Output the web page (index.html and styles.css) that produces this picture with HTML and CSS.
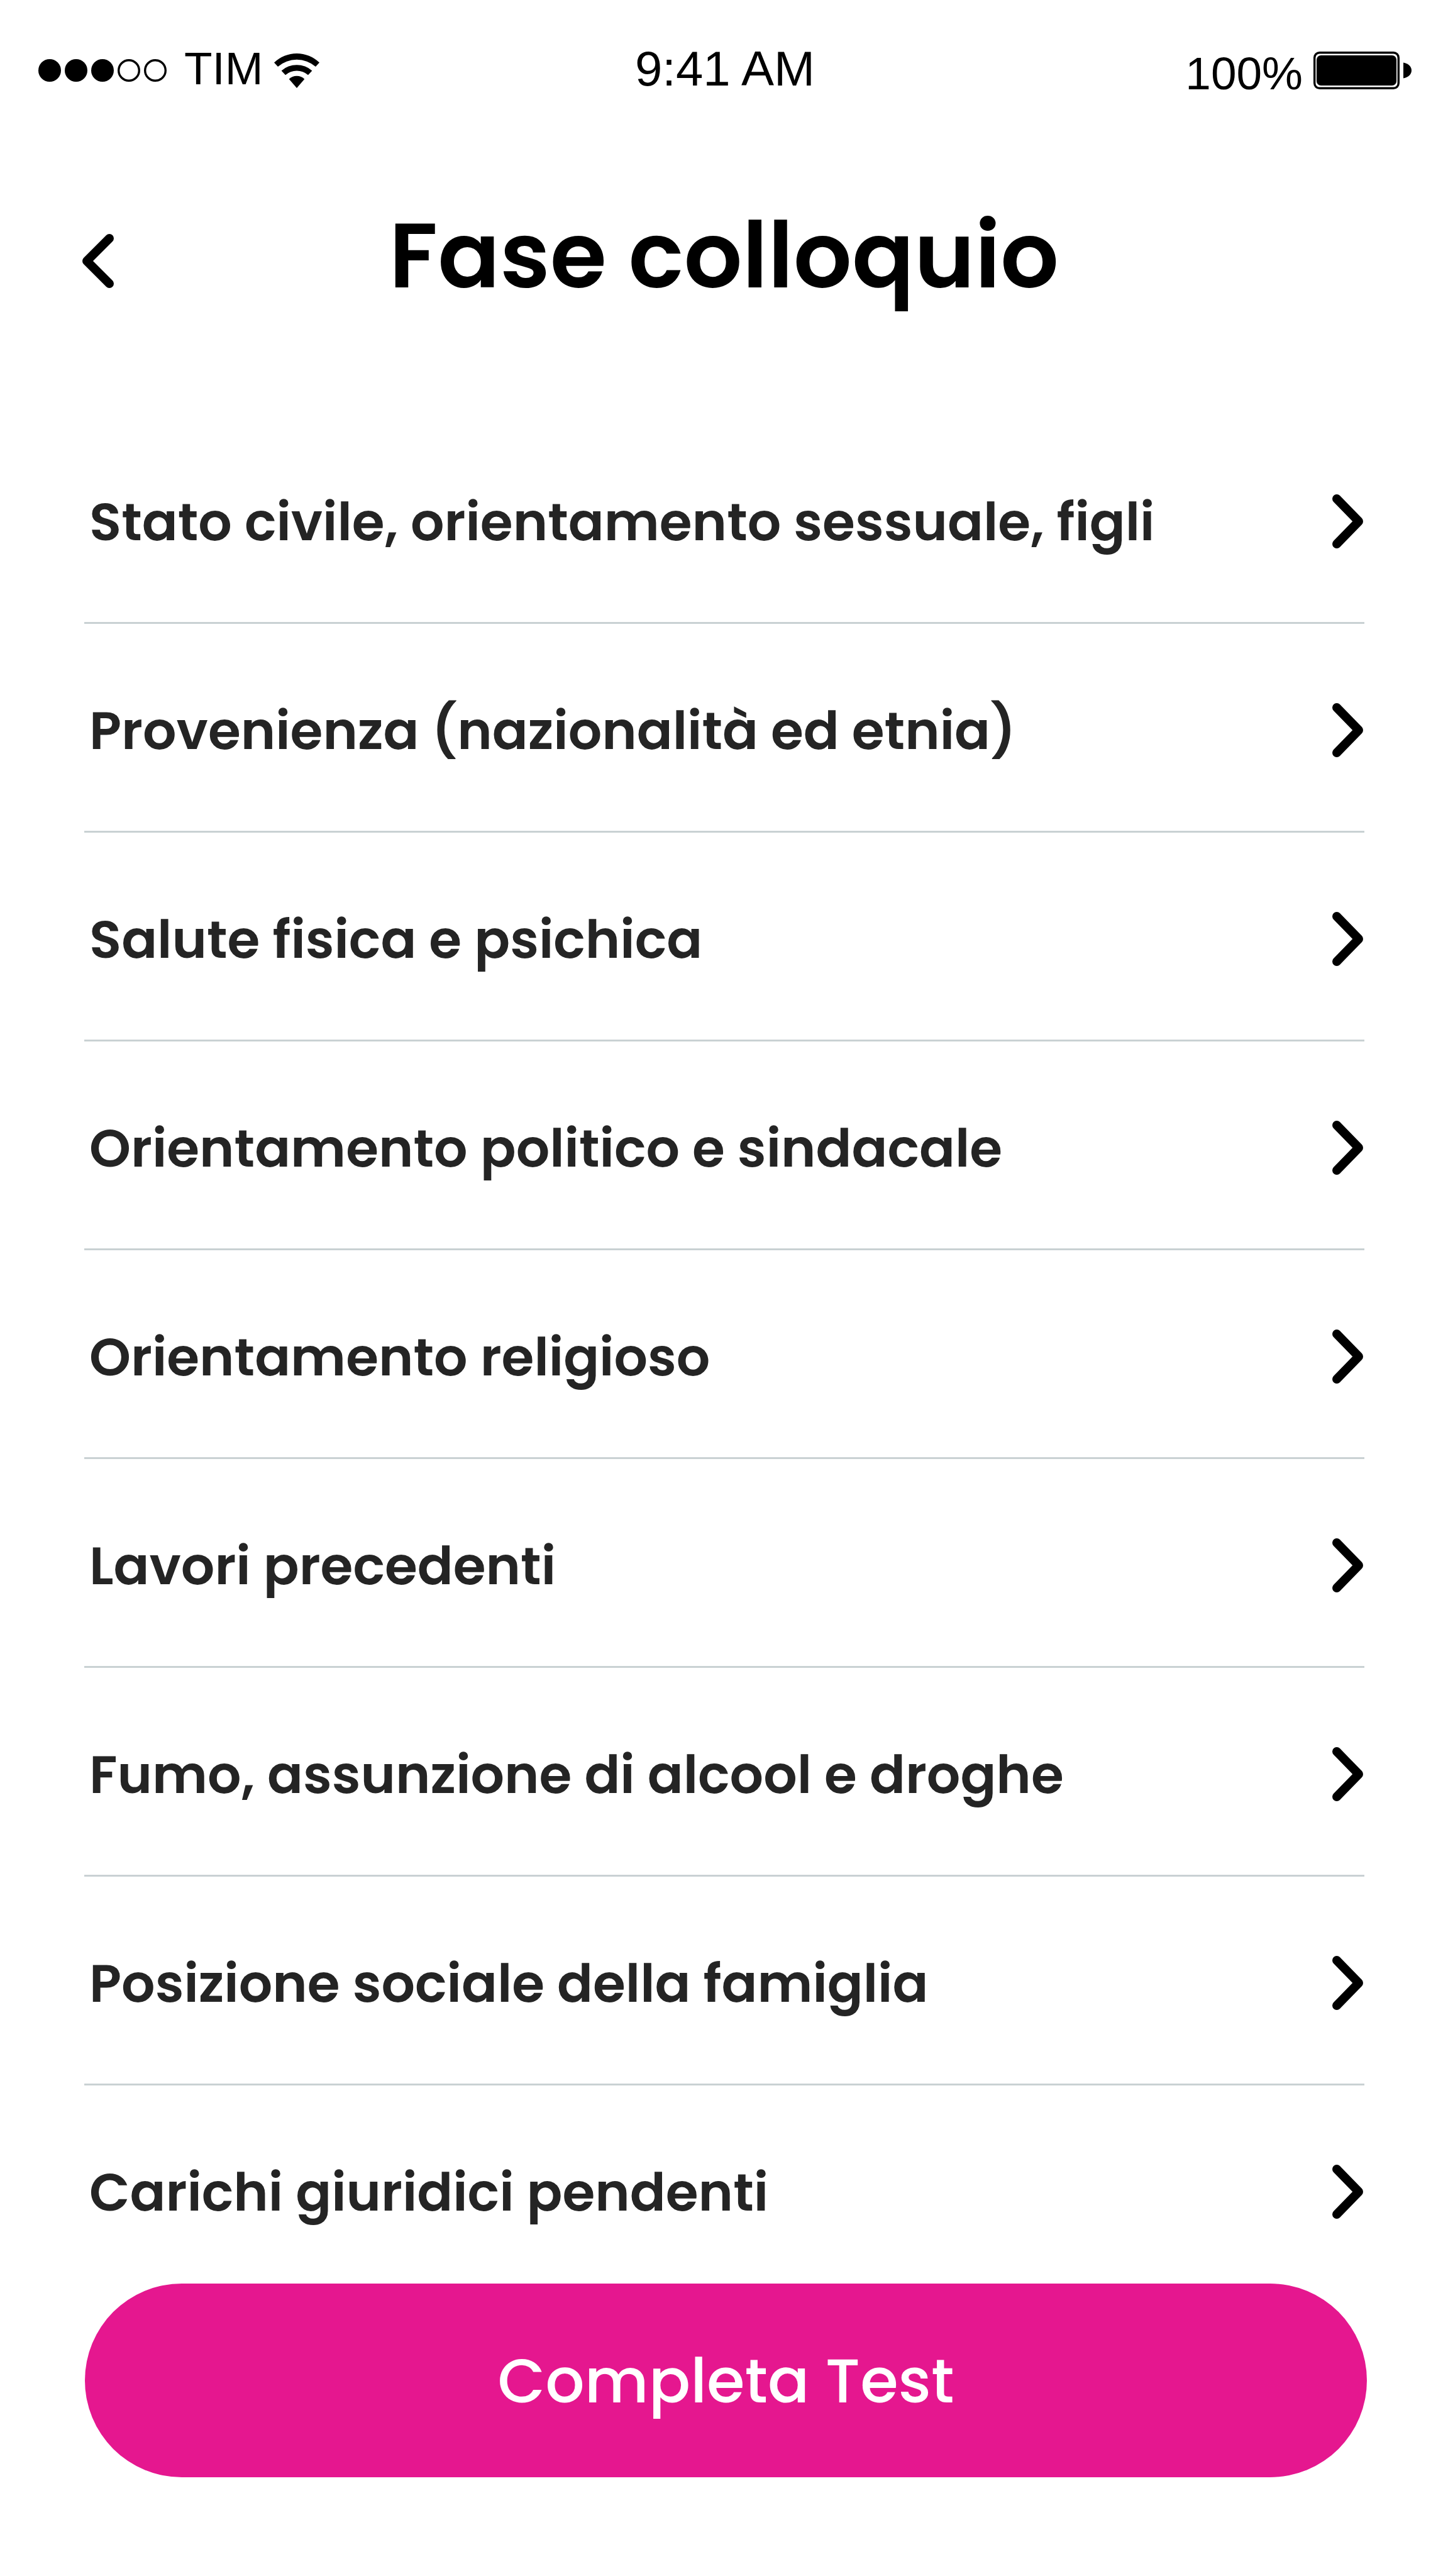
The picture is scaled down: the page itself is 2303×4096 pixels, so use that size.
FILE: index.html
```html
<!DOCTYPE html>
<html lang="it">
<head>
    <meta charset="UTF-8">
    <meta name="viewport" content="width=device-width, initial-scale=1">
    <title>Fase colloquio</title>
    <link rel="stylesheet" href="styles.css">
</head>
<body>
<div class="status">
    <div class="status-left">
        <svg class="signal" viewBox="0 0 204 36">
            <circle cx="18" cy="18" r="18"/>
            <circle cx="60" cy="18" r="18"/>
            <circle cx="102" cy="18" r="18"/>
            <circle class="empty" cx="144" cy="18" r="16.3"/>
            <circle class="empty" cx="186" cy="18" r="16.3"/>
        </svg>
        <span class="carrier">TIM</span>
        <svg class="wifi" viewBox="0 0 72 55">
            <path d="M0 14.600A51.700 51.700 0 0 1 72 14.600L66 21A46 46 0 0 0 6 21Z"/>
            <path d="M11.600 27.400A37 37 0 0 1 60.400 27.400L54 34.300A27.500 27.500 0 0 0 18 34.300Z"/>
            <path d="M23.700 40.700A17.600 17.600 0 0 1 48.300 40.700L36 55Z"/>
        </svg>
    </div>
    <span class="time">9:41 AM</span>
    <div class="status-right">
        <span class="percent">100%</span>
        <svg class="battery" viewBox="0 0 156 60">
            <rect class="shell" x="1.7" y="1.700" width="133.600" height="56.600" rx="8"/>
            <rect x="5" y="6" width="127" height="48" rx="7"/>
            <path d="M143 17.500C151 19 156 24 156 30S151 41 143 42.500Z"/>
        </svg>
    </div>
</div>

<div class="header">
    <button class="back" type="button" aria-label="Indietro">
        <svg class="arrow" viewBox="0 0 50 88"><path d="M43 8L7 44L43 80"/></svg>
    </button>
    <h1>Fase colloquio</h1>
</div>

<ul class="list">
    <li><a href="#">Stato civile, orientamento sessuale, figli <svg class="arrow" viewBox="0 0 50 88"><path d="M6 7L41 43L6 79"/></svg></a></li>
    <li><a href="#">Provenienza (nazionalità ed etnia) <svg class="arrow" viewBox="0 0 50 88"><path d="M6 7L41 43L6 79"/></svg></a></li>
    <li><a href="#">Salute fisica e psichica <svg class="arrow" viewBox="0 0 50 88"><path d="M6 7L41 43L6 79"/></svg></a></li>
    <li><a href="#">Orientamento politico e sindacale <svg class="arrow" viewBox="0 0 50 88"><path d="M6 7L41 43L6 79"/></svg></a></li>
    <li><a href="#">Orientamento religioso <svg class="arrow" viewBox="0 0 50 88"><path d="M6 7L41 43L6 79"/></svg></a></li>
    <li><a href="#">Lavori precedenti <svg class="arrow" viewBox="0 0 50 88"><path d="M6 7L41 43L6 79"/></svg></a></li>
    <li><a href="#">Fumo, assunzione di alcool e droghe <svg class="arrow" viewBox="0 0 50 88"><path d="M6 7L41 43L6 79"/></svg></a></li>
    <li><a href="#">Posizione sociale della famiglia <svg class="arrow" viewBox="0 0 50 88"><path d="M6 7L41 43L6 79"/></svg></a></li>
    <li><a href="#">Carichi giuridici pendenti <svg class="arrow" viewBox="0 0 50 88"><path d="M6 7L41 43L6 79"/></svg></a></li>
</ul>

<div class="footer">
    <button class="complete" type="button">Completa Test</button>
</div>
</body>
</html>
```
FILE: styles.css
```css
* {
    margin: 0;
    padding: 0;
    box-sizing: border-box;
}
body {
    background-color: #fff;
    color: #000;
    font-family: "Poppins", "Inter", sans-serif;
}
ul {
    list-style: none;
}
button {
    border: none;
    background: none;
    font-family: inherit;
    cursor: pointer;
}
svg {
    display: block;
    flex-shrink: 0;
    overflow: visible;
}

/* status bar */
.status {
    display: grid;
    grid-template-columns: 1fr auto 1fr;
    align-items: center;
    padding: 67px 58px 0 61px;
    font-family: "Liberation Sans", Arial, sans-serif;
    font-size: 73px;
    line-height: 80px;
}
.status-left,
.status-right {
    display: flex;
    align-items: center;
}
.status-right {
    justify-content: flex-end;
    gap: 17px;
}
.signal {
    width: 204px;
    height: 36px;
}
.signal .empty,
.battery .shell {
    fill: none;
    stroke: #000;
    stroke-width: 3.4;
}
.carrier {
    padding: 0 17px 6px 28px;
}
.wifi {
    width: 72px;
    height: 55px;
}
.time {
    padding-bottom: 6px;
    font-size: 78px;
}
.percent {
    padding-top: 10px;
}
.battery {
    width: 156px;
    height: 60px;
}

/* title */
.header {
    display: grid;
    grid-template-columns: 1fr auto 1fr;
    align-items: center;
    padding: 159px 131px 164px;
}
.header h1 {
    font-size: 146px;
    font-weight: 600;
    line-height: 180px;
}
.back {
    justify-self: start;
    padding-top: 18px;
}
.arrow {
    width: 50px;
    height: 88px;
    fill: none;
    stroke: #000;
    stroke-width: 14;
    stroke-linecap: round;
    stroke-linejoin: round;
}

/* list */
.list {
    padding: 0 133px 0 134px;
}
.list a {
    display: flex;
    justify-content: space-between;
    align-items: center;
    padding: 126px 0 115px 8px;
    border-bottom: 3px solid #c9d1d3;
    color: #242424;
    font-size: 84px;
    font-weight: 600;
    line-height: 88px;
    text-decoration: none;
}
.list li:last-child a {
    padding-bottom: 0;
    border-bottom: none;
}

/* bottom button */
.footer {
    padding: 101px 129px 157px 135px;
}
.complete {
    width: 100%;
    height: 308px;
    border-radius: 154px;
    background-color: #e5178f;
    color: #fff;
    font-size: 98px;
    font-weight: 500;
}
```
